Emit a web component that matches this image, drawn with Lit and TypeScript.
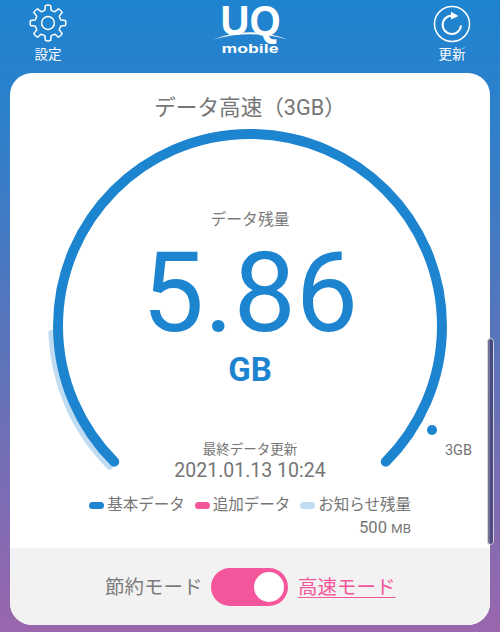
import { LitElement, html, css, svg } from "lit";
import { customElement } from "lit/decorators.js";

function gearPath(cx: number, cy: number, ro: number, ri: number, teeth: number): string {
  const step = (Math.PI * 2) / teeth;
  const p = (r: number, t: number) =>
    `${(cx + r * Math.cos(t)).toFixed(2)} ${(cy + r * Math.sin(t)).toFixed(2)}`;
  let d = "";
  for (let i = 0; i < teeth; i++) {
    const a = -Math.PI / 2 + i * step;
    const a0 = a - step * 0.3;
    const a1 = a - step * 0.19;
    const a2 = a + step * 0.19;
    const a3 = a + step * 0.3;
    d += `${i === 0 ? "M" : "Q" + p(ri * 0.96, a - step / 2) + " "}${p(ri, a0)}L${p(ro, a1)}Q${p(ro + 0.8, a)} ${p(ro, a2)}L${p(ri, a3)}`;
  }
  const first = -Math.PI / 2 - step * 0.3;
  return d + `Q${p(ri * 0.96, -Math.PI / 2 - step / 2)} ${p(ri, first)}Z`;
}

@customElement("app-root")
export class AppRoot extends LitElement {
  static styles = css`
    :host {
      display: block;
      position: relative;
      width: 500px;
      height: 632px;
      overflow: hidden;
      background: linear-gradient(180deg, #1e84d0 0%, #2f7fca 20%, #5b74bb 55%, #9a66ad 100%);
      font-family: Roboto, "Noto Sans CJK JP", sans-serif;
      color: #757575;
    }
    .header {
      height: 73px;
      display: grid;
      grid-template-columns: 96px 1fr 96px;
      color: #fff;
    }
    .hbtn {
      display: flex;
      flex-direction: column;
      align-items: center;
      font-size: 13.5px;
      line-height: 16px;
    }
    .hbtn svg { display: block; width: 44px; height: 44px; margin: 1px 0; }
    .logo { justify-self: center; display: block; width: 80px; height: 60px; }
    .logo text {
      fill: #fff;
      font-family: "Liberation Sans", Roboto, sans-serif;
      font-weight: 700;
      text-anchor: middle;
    }
    .card {
      margin: 0 10px;
      height: 552px;
      background: #fff;
      border-radius: 22px;
      overflow: hidden;
      display: flex;
      flex-direction: column;
    }
    .main { flex: 1; position: relative; display: flex; flex-direction: column; align-items: center; }
    .gauge { position: absolute; left: 0; top: 0; width: 480px; height: 475px; }
    .title { font-size: 21.6px; line-height: 28px; margin-top: 21px; color: #757575; }
    .remain { font-size: 15.8px; line-height: 20px; margin-top: 88px; color: #7b7b7b; }
    .value { font-size: 111px; line-height: 110px; color: #1d84d0; margin-top: 8px; }
    .unit { font-size: 33px; line-height: 38px; font-weight: 700; color: #1d84d0; margin-top: 3px; }
    .updated { font-size: 13.5px; line-height: 18px; margin-top: 51px; }
    .date { font-size: 19.5px; line-height: 24px; margin-top: 1px; }
    .cap { position: absolute; right: 18px; top: 369px; font-size: 14.5px; line-height: 18px; }
    .legend {
      align-self: flex-end;
      margin-right: 79px;
      margin-top: 12px;
      display: flex;
      flex-direction: column;
      align-items: flex-end;
    }
    .legend-row { display: flex; align-items: center; font-size: 15.5px; line-height: 20px; }
    .item { display: flex; align-items: center; gap: 3px; margin-left: 10px; }
    .swatch { width: 15px; height: 7px; border-radius: 4px; }
    .blue { background: #1d84d0; }
    .pink { background: #f4569b; }
    .light { background: #bfdcf2; }
    .amount { font-size: 16.6px; line-height: 20px; margin-top: 3px; }
    .amount small { font-size: 13.3px; margin-left: 0; }
    .footer {
      height: 77px;
      background: #f2f2f2;
      display: flex;
      align-items: center;
      padding-left: 95px;
      font-size: 19.5px;
      color: #7b7b7b;
    }
    .footer span { padding-bottom: 3px; }
    .toggle {
      width: 77px;
      height: 38px;
      border-radius: 19px;
      background: #f4569b;
      margin: 0 10px 0 8.5px;
      display: flex;
      justify-content: flex-end;
      align-items: center;
      padding-right: 4px;
      box-sizing: border-box;
    }
    .knob { width: 30px; height: 30px; border-radius: 50%; background: #fff; }
    .footer .link { color: #f4569b; text-decoration: underline; text-underline-offset: 3px; }
    .scroll {
      position: absolute;
      left: 487px;
      top: 338px;
      width: 5px;
      height: 205px;
      border: 1.5px solid #d4d4d4;
      border-radius: 4px;
      background: rgba(60, 60, 110, 0.72);
    }
  `;

  render() {
    const cx = 240, cy = 253;
    const pt = (r: number, deg: number) => {
      const t = (deg * Math.PI) / 180;
      return `${(cx + r * Math.cos(t)).toFixed(2)} ${(cy + r * Math.sin(t)).toFixed(2)}`;
    };
    return html`
      <div class="header">
        <div class="hbtn">
          <svg viewBox="0 0 44 44" fill="none" stroke="#fff">
            <path d=${gearPath(22, 22, 17.6, 13.2, 8)} stroke-width="1.5" stroke-linejoin="round"></path>
            <circle cx="22" cy="22" r="6.4" stroke-width="1.5"></circle>
          </svg>
          <span>設定</span>
        </div>
        <svg class="logo" viewBox="0 0 80 60">
          <text x="40.5" y="35" font-size="42" textLength="60" lengthAdjust="spacingAndGlyphs">UQ</text>
          <path d="M3 39.5 Q40 25 77 39.5 Q40 29 3 39.5Z" fill="#fff"></path>
          <text x="40" y="53" font-size="13.5" textLength="57" lengthAdjust="spacingAndGlyphs">mobile</text>
        </svg>
        <div class="hbtn">
          <svg viewBox="0 0 44 44" fill="none" stroke="#fff">
            <circle cx="22" cy="23" r="17.5" stroke-width="1.5"></circle>
            <path d="M31 24.5 A9.2 9.2 0 1 1 22 14.6" stroke-width="2.2"></path>
            <path d="M21 10.8 L28.4 15 L21 18.6Z" fill="#fff" stroke="none"></path>
          </svg>
          <span>更新</span>
        </div>
      </div>
      <div class="card">
        <div class="main">
          <svg class="gauge" viewBox="0 0 480 475" fill="none">
            ${svg`
              <path d="M${pt(198.5, 178)} A198.5 198.5 0 0 0 ${pt(198.5, 135)}" stroke="#bfdcf2" stroke-width="6.5" stroke-linecap="round"></path>
              <path d="M${pt(192, 135)} A192 192 0 1 1 ${pt(192, 45)}" stroke="#1d84d0" stroke-width="10" stroke-linecap="round"></path>
              <circle cx="422" cy="357" r="5" fill="#1d84d0"></circle>
            `}
          </svg>
          <div class="title">データ高速（3GB）</div>
          <div class="remain">データ残量</div>
          <div class="value">5.86</div>
          <div class="unit">GB</div>
          <div class="updated">最終データ更新</div>
          <div class="date">2021.01.13 10:24</div>
          <div class="cap">3GB</div>
          <div class="legend">
            <div class="legend-row">
              <span class="item"><span class="swatch blue"></span>基本データ</span>
              <span class="item"><span class="swatch pink"></span>追加データ</span>
              <span class="item"><span class="swatch light"></span>お知らせ残量</span>
            </div>
            <div class="amount">500 <small>MB</small></div>
          </div>
        </div>
        <div class="footer">
          <span>節約モード</span>
          <div class="toggle"><div class="knob"></div></div>
          <span class="link">高速モード</span>
        </div>
      </div>
      <div class="scroll"></div>
    `;
  }
}
